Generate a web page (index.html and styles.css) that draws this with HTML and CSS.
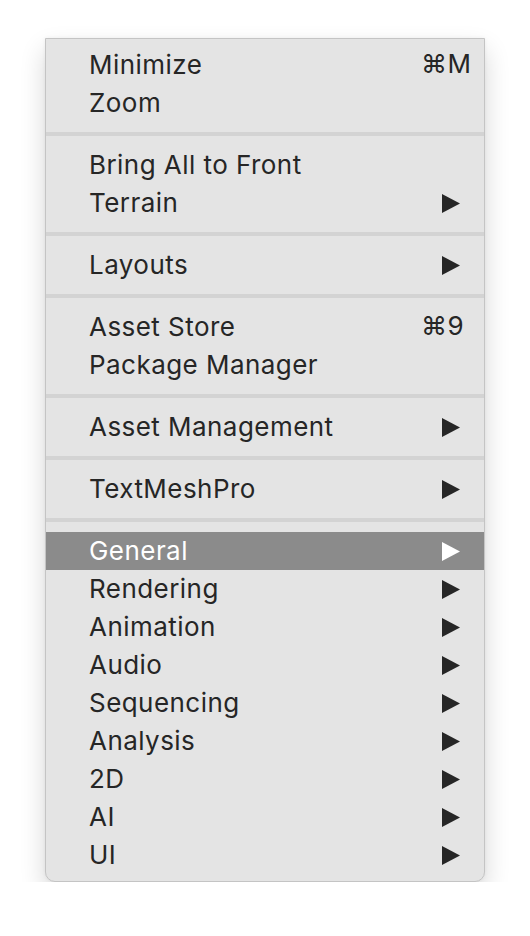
FILE: index.html
```html
<!DOCTYPE html>
<html>
<head>
<meta charset="utf-8">
<link rel="stylesheet" href="styles.css">
</head>
<body>
<div class="menu">
  <div class="item"><span class="label">Minimize</span><span class="key">⌘M</span></div>
  <div class="item"><span class="label">Zoom</span></div>
  <div class="sep"></div>
  <div class="item"><span class="label">Bring All to Front</span></div>
  <div class="item"><span class="label">Terrain</span><svg class="arrow" viewBox="0 0 18 19"><polygon points="0,0 18,9.5 0,19"/></svg></div>
  <div class="sep"></div>
  <div class="item"><span class="label">Layouts</span><svg class="arrow" viewBox="0 0 18 19"><polygon points="0,0 18,9.5 0,19"/></svg></div>
  <div class="sep"></div>
  <div class="item"><span class="label">Asset Store</span><span class="key">⌘9</span></div>
  <div class="item"><span class="label">Package Manager</span></div>
  <div class="sep"></div>
  <div class="item"><span class="label">Asset Management</span><svg class="arrow" viewBox="0 0 18 19"><polygon points="0,0 18,9.5 0,19"/></svg></div>
  <div class="sep"></div>
  <div class="item"><span class="label">TextMeshPro</span><svg class="arrow" viewBox="0 0 18 19"><polygon points="0,0 18,9.5 0,19"/></svg></div>
  <div class="sep"></div>
  <div class="item active"><span class="label">General</span><svg class="arrow" viewBox="0 0 18 19"><polygon points="0,0 18,9.5 0,19"/></svg></div>
  <div class="item"><span class="label">Rendering</span><svg class="arrow" viewBox="0 0 18 19"><polygon points="0,0 18,9.5 0,19"/></svg></div>
  <div class="item"><span class="label">Animation</span><svg class="arrow" viewBox="0 0 18 19"><polygon points="0,0 18,9.5 0,19"/></svg></div>
  <div class="item"><span class="label">Audio</span><svg class="arrow" viewBox="0 0 18 19"><polygon points="0,0 18,9.5 0,19"/></svg></div>
  <div class="item"><span class="label">Sequencing</span><svg class="arrow" viewBox="0 0 18 19"><polygon points="0,0 18,9.5 0,19"/></svg></div>
  <div class="item"><span class="label">Analysis</span><svg class="arrow" viewBox="0 0 18 19"><polygon points="0,0 18,9.5 0,19"/></svg></div>
  <div class="item"><span class="label">2D</span><svg class="arrow" viewBox="0 0 18 19"><polygon points="0,0 18,9.5 0,19"/></svg></div>
  <div class="item"><span class="label">AI</span><svg class="arrow" viewBox="0 0 18 19"><polygon points="0,0 18,9.5 0,19"/></svg></div>
  <div class="item"><span class="label">UI</span><svg class="arrow" viewBox="0 0 18 19"><polygon points="0,0 18,9.5 0,19"/></svg></div>
</div>
</body>
</html>
```
FILE: styles.css
```css
html, body {
  margin: 0;
  padding: 0;
  background: #ffffff;
}
body {
  padding: 38px 0 0 45px;
  font-family: Inter, "Noto Sans", sans-serif;
}
.menu {
  width: 438px;
  background: #e4e4e4;
  border: 1px solid #c4c4c4;
  border-radius: 0 0 10px 10px;
  padding: 7px 0;
  box-shadow: 0 12px 26px rgba(0, 0, 0, 0.16), 0 0 4px rgba(0, 0, 0, 0.05);
}
.item {
  height: 38px;
  box-sizing: border-box;
  padding-bottom: 2px;
  display: flex;
  align-items: center;
  position: relative;
  padding-left: 43px;
  color: #262626;
  font-size: 26px;
  letter-spacing: 0.45px;
}
.item.active {
  background: #8b8b8b;
  color: #ffffff;
}
.label {
  flex: 1;
}
.key {
  position: absolute;
  left: 375px;
  top: 0;
  line-height: 36px;
}
.arrow {
  width: 18px;
  height: 19px;
  margin-right: 24px;
  margin-top: 2px;
  fill: #262626;
}
.item.active .arrow {
  fill: #ffffff;
}
.sep {
  height: 4px;
  margin: 10px 0;
  background: #d3d3d3;
}
```
